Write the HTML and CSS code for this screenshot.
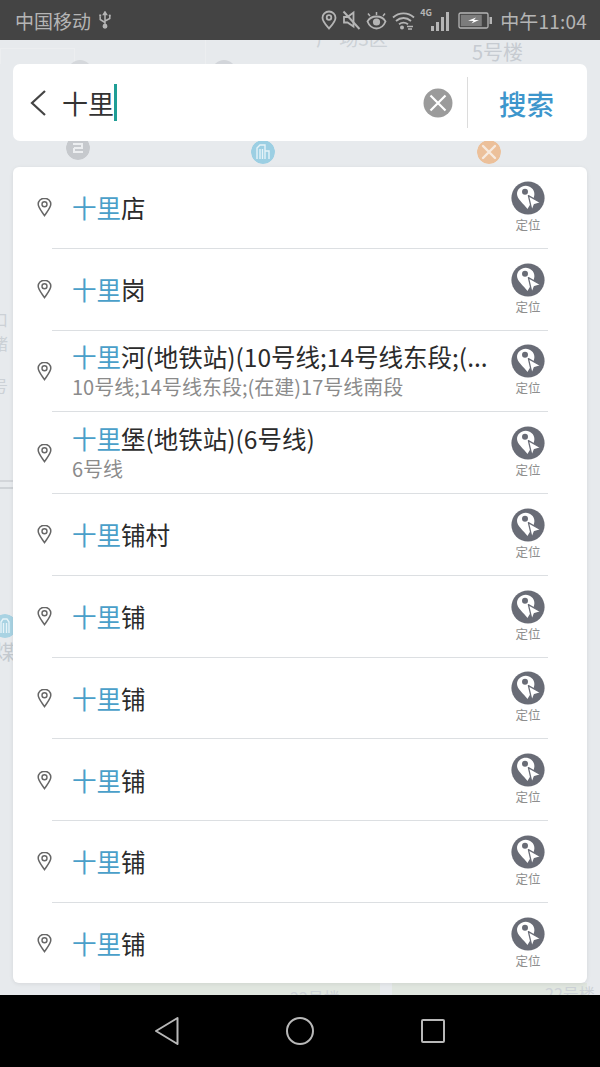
FILE: index.html
```html
<!DOCTYPE html>
<html lang="zh-CN">
<head>
    <meta charset="UTF-8">
    <meta name="viewport" content="width=device-width, initial-scale=1.0">
    <title>搜索</title>
    <link rel="stylesheet" href="styles.css">
</head>
<body>
    <svg class="sprites" width="0" height="0">
        <symbol id="pin" viewBox="0 0 15 20">
            <path d="M7.500 1.200C3.800 1.200 1.200 3.900 1.200 7.100 1.200 10.800 5.200 15 7.500 18.600 9.800 15 13.800 10.800 13.800 7.100 13.800 3.900 11.200 1.200 7.500 1.200Z" fill="none" stroke="#666" stroke-width="1.500"/>
            <circle cx="7.500" cy="7.200" r="2.500" fill="none" stroke="#666" stroke-width="1.400"/>
        </symbol>
        <symbol id="locate" viewBox="0 0 34 34">
            <circle cx="17" cy="17" r="16.600" fill="#696c76"/>
            <path d="M14.700 4.800C10 4.800 6 8.400 6 13 6 18 12.500 22.500 16.500 28 18.500 24 23.400 18.500 23.400 13 23.400 8.400 19.400 4.800 14.700 4.800Z" fill="#fff"/>
            <circle cx="14" cy="10.800" r="3" fill="#696c76"/>
            <path d="M17.400 14.600 29.800 21.800 23.400 23.600 21 29.800Z" fill="#fff" stroke="#696c76" stroke-width="1.300" stroke-linejoin="round"/>
        </symbol>
    </svg>

    <div class="screen">
        <div class="status-bar">
            <div class="status-left">
                <span>中国移动</span>
                <svg width="14" height="18" viewBox="0 0 14 18" fill="none" stroke="#b5b5b5" stroke-width="1.500">
                    <path d="M7 1.500V15M7 11.500 2.200 8.500V5.500M7 10 11.800 7.500V5"/>
                    <circle cx="7" cy="15.200" r="1.700" fill="#b5b5b5"/>
                    <path d="M5.500 3.500 7 1l1.500 2.500Z" fill="#b5b5b5"/>
                    <rect x="1.200" y="3.500" width="2" height="2" fill="#b5b5b5" stroke="none"/>
                    <circle cx="11.800" cy="4.500" r="1.100" fill="#b5b5b5" stroke="none"/>
                </svg>
            </div>
            <div class="status-right">
                <svg width="16" height="20" viewBox="0 0 16 20" fill="none" stroke="#b5b5b5" stroke-width="1.800">
                    <path d="M8 1.500C4.300 1.500 1.500 4.300 1.500 7.700 1.500 11.500 5.500 15.500 8 18.500 10.500 15.500 14.500 11.500 14.500 7.700 14.500 4.300 11.700 1.500 8 1.500Z"/>
                    <circle cx="8" cy="7.500" r="2.300"/>
                </svg>
                <svg width="19" height="20" viewBox="0 0 19 20" fill="none" stroke="#b5b5b5" stroke-width="1.800">
                    <path d="M2 7H5.500L11.500 2.500V16.500L5.500 12.500H2Z"/>
                    <path d="M1.500 1.500 17.500 19" stroke-width="2"/>
                </svg>
                <svg width="21" height="19" viewBox="0 0 21 19" fill="none" stroke="#b5b5b5" stroke-width="1.800">
                    <path d="M1.500 10.500C3.500 6.800 6.500 5.500 10.500 5.500S17.500 6.800 19.500 10.500C17.500 15.500 14.500 17.500 10.500 17.500S3.500 15.500 1.500 10.500Z"/>
                    <circle cx="10.500" cy="11" r="3.600" fill="#b5b5b5" stroke="none"/>
                    <path d="M4 5 2 2.500M10.500 4V1M17 5 19 2.500" stroke-width="1.500"/>
                </svg>
                <svg width="23" height="19" viewBox="0 0 23 19" fill="none" stroke="#b5b5b5" stroke-width="1.800">
                    <path d="M1 6.500C7 1 16 1 22 6.500M4 10C8.500 6 14.500 6 19 10M7 13.200C10 11 13 11 16 13.200"/>
                    <circle cx="10" cy="16.500" r="2" fill="#b5b5b5" stroke="none"/>
                    <path d="M15 15.500H21M16 18H20" stroke-width="1.400"/>
                </svg>
                <div class="signal">
                    <span class="net">4G</span>
                    <span class="bar bar-1"></span>
                    <span class="bar bar-2"></span>
                    <span class="bar bar-3"></span>
                    <span class="bar bar-4"></span>
                </div>
                <svg class="battery" width="35" height="17" viewBox="0 0 35 17">
                    <rect x="1" y="1" width="29" height="15" rx="1.500" fill="none" stroke="#b5b5b5" stroke-width="1.300"/>
                    <rect x="2.800" y="2.800" width="21" height="11.400" fill="#7c7c7c"/>
                    <rect x="31.500" y="5" width="2.500" height="7" fill="#b5b5b5"/>
                    <path d="M10 8.800 18 5.500 16 8 21 8 13.500 11.500 15.500 9Z" fill="#fff"/>
                </svg>
                <span class="clock">中午11:04</span>
            </div>
        </div>

        <div class="map">
            <!-- faded map behind the cards -->
            <div class="block block-a"></div>
            <div class="block block-b"></div>
            <div class="block block-c"></div>
            <div class="block block-d"></div>
            <div class="block block-e"></div>
            <div class="block block-f"></div>
            <span class="map-label label-area">广 场3区</span>
            <span class="map-label label-bldg">5号楼</span>
            <span class="map-label label-l1">口</span>
            <span class="map-label label-l2">诸</span>
            <span class="map-label label-l3">号</span>
            <span class="map-label label-l4">煤</span>
            <span class="map-label label-b1">22号楼</span>
            <span class="map-label label-b2">22号楼</span>
            <span class="poi poi-top-a"></span>
            <span class="poi poi-top-b"></span>
            <svg class="poi poi-gray" viewBox="0 0 24 24">
                <circle cx="12" cy="12" r="12" fill="#c6c9cd"/>
                <path d="M7 8H16V12H8M8 12V16H17" fill="none" stroke="#eceef0" stroke-width="2"/>
            </svg>
            <svg class="poi poi-blue" viewBox="0 0 24 24">
                <circle cx="12" cy="12" r="12" fill="#9ccfe3"/>
                <path d="M6 19V8L9 5H14V19M14 11H18V19M9 9V19M11.500 9V19" fill="none" stroke="#e6f3f8" stroke-width="1.400"/>
            </svg>
            <svg class="poi poi-orange" viewBox="0 0 24 24">
                <circle cx="12" cy="12" r="12" fill="#ecc09a"/>
                <path d="M6 6 18 18M18 6 6 18" stroke="#f7eadf" stroke-width="2.400" stroke-linecap="round"/>
            </svg>
            <svg class="poi poi-side" viewBox="0 0 24 24">
                <circle cx="12" cy="12" r="12" fill="#a9d3e3"/>
                <path d="M8 19V8L10 5H14L16 8V19M10.500 9V19M13.500 9V19" fill="none" stroke="#e6f3f8" stroke-width="1.400"/>
            </svg>

            <div class="search-card">
                <svg class="back" width="18" height="28" viewBox="0 0 18 28" fill="none" stroke="#444" stroke-width="2.200">
                    <path d="M16 2 3 14 16 26"/>
                </svg>
                <div class="query"><span>十里</span><i class="caret"></i></div>
                <svg class="clear" width="30" height="30" viewBox="0 0 30 30">
                    <circle cx="15" cy="15" r="14.500" fill="#9b9b9b"/>
                    <path d="M7.500 7.500 22.500 22.500M22.500 7.500 7.500 22.500" stroke="#fff" stroke-width="2.200"/>
                </svg>
                <div class="search-sep"></div>
                <div class="search-btn">搜索</div>
            </div>

            <div class="result-card">
                <div class="row">
                    <svg class="row-pin"><use href="#pin"/></svg>
                    <div class="row-text"><div class="title"><em>十里</em>店</div></div>
                    <div class="locate"><svg><use href="#locate"/></svg><span>定位</span></div>
                </div>
                <div class="sep"></div>
                <div class="row">
                    <svg class="row-pin"><use href="#pin"/></svg>
                    <div class="row-text"><div class="title"><em>十里</em>岗</div></div>
                    <div class="locate"><svg><use href="#locate"/></svg><span>定位</span></div>
                </div>
                <div class="sep"></div>
                <div class="row">
                    <svg class="row-pin"><use href="#pin"/></svg>
                    <div class="row-text">
                        <div class="title"><em>十里</em>河(地铁站)(10号线;14号线东段;(...</div>
                        <div class="sub">10号线;14号线东段;(在建)17号线南段</div>
                    </div>
                    <div class="locate"><svg><use href="#locate"/></svg><span>定位</span></div>
                </div>
                <div class="sep"></div>
                <div class="row">
                    <svg class="row-pin"><use href="#pin"/></svg>
                    <div class="row-text">
                        <div class="title"><em>十里</em>堡(地铁站)(6号线)</div>
                        <div class="sub">6号线</div>
                    </div>
                    <div class="locate"><svg><use href="#locate"/></svg><span>定位</span></div>
                </div>
                <div class="sep"></div>
                <div class="row">
                    <svg class="row-pin"><use href="#pin"/></svg>
                    <div class="row-text"><div class="title"><em>十里</em>铺村</div></div>
                    <div class="locate"><svg><use href="#locate"/></svg><span>定位</span></div>
                </div>
                <div class="sep"></div>
                <div class="row">
                    <svg class="row-pin"><use href="#pin"/></svg>
                    <div class="row-text"><div class="title"><em>十里</em>铺</div></div>
                    <div class="locate"><svg><use href="#locate"/></svg><span>定位</span></div>
                </div>
                <div class="sep"></div>
                <div class="row">
                    <svg class="row-pin"><use href="#pin"/></svg>
                    <div class="row-text"><div class="title"><em>十里</em>铺</div></div>
                    <div class="locate"><svg><use href="#locate"/></svg><span>定位</span></div>
                </div>
                <div class="sep"></div>
                <div class="row">
                    <svg class="row-pin"><use href="#pin"/></svg>
                    <div class="row-text"><div class="title"><em>十里</em>铺</div></div>
                    <div class="locate"><svg><use href="#locate"/></svg><span>定位</span></div>
                </div>
                <div class="sep"></div>
                <div class="row">
                    <svg class="row-pin"><use href="#pin"/></svg>
                    <div class="row-text"><div class="title"><em>十里</em>铺</div></div>
                    <div class="locate"><svg><use href="#locate"/></svg><span>定位</span></div>
                </div>
                <div class="sep"></div>
                <div class="row">
                    <svg class="row-pin"><use href="#pin"/></svg>
                    <div class="row-text"><div class="title"><em>十里</em>铺</div></div>
                    <div class="locate"><svg><use href="#locate"/></svg><span>定位</span></div>
                </div>
            </div>
        </div>

        <div class="nav-bar">
            <svg width="26" height="30" viewBox="0 0 26 30" fill="none" stroke="#b8b8b8" stroke-width="2" stroke-linejoin="round">
                <path d="M23.500 2 2 15 23.500 28Z"/>
            </svg>
            <svg width="30" height="30" viewBox="0 0 30 30" fill="none" stroke="#b8b8b8" stroke-width="2">
                <circle cx="15" cy="15" r="13"/>
            </svg>
            <svg width="26" height="26" viewBox="0 0 26 26" fill="none" stroke="#b8b8b8" stroke-width="2" stroke-linejoin="round">
                <rect x="2" y="2" width="22" height="22" rx="1"/>
            </svg>
        </div>
    </div>
</body>
</html>
```

FILE: styles.css
```css
* {
    box-sizing: border-box;
}
body {
    margin: 0;
    font-family: "Noto Sans CJK SC", "Noto Sans", sans-serif;
    background-color: #000;
}
.sprites {
    position: absolute;
}
.screen {
    width: 600px;
    height: 1067px;
    display: flex;
    flex-direction: column;
    overflow: hidden;
}

/* status bar */
.status-bar {
    height: 40px;
    flex-shrink: 0;
    background-color: #444;
    color: #b5b5b5;
    display: flex;
    justify-content: space-between;
    align-items: center;
    padding: 0 13px 0 15px;
    font-size: 19px;
}
.status-left {
    display: flex;
    align-items: center;
    gap: 7px;
}
.status-right {
    display: flex;
    align-items: center;
    gap: 5px;
}
.signal {
    position: relative;
    width: 29px;
    height: 22px;
    display: flex;
    align-items: flex-end;
    justify-content: flex-end;
    gap: 2px;
}
.net {
    position: absolute;
    left: 0;
    top: -2px;
    font-size: 9px;
    font-weight: 700;
    line-height: 12px;
}
.bar {
    width: 3px;
    background-color: #b5b5b5;
}
.bar-1 { height: 5px; }
.bar-2 { height: 9px; }
.bar-3 { height: 14px; }
.bar-4 { height: 19px; }
.battery {
    margin-left: 4px;
}
.clock {
    margin-left: 2px;
    letter-spacing: 0.2px;
}

/* map background */
.map {
    position: relative;
    flex: 1;
    background-color: #e7eaed;
    padding: 24px 13px 12px;
    display: flex;
    flex-direction: column;
    gap: 26px;
    overflow: hidden;
}
.block {
    position: absolute;
}
.block-a { left: 0; top: 8px; width: 75px; height: 16px; border: 1px solid #eceef0; border-bottom: none; }
.block-b { left: 205px; top: 0; width: 90px; height: 24px; border-left: 1px solid #eceef0; }
.block-c { left: 100px; bottom: 0; width: 280px; height: 12px; background-color: #e0e6df; }
.block-d { left: 392px; bottom: 0; width: 195px; height: 12px; background-color: #e0e6df; }
.block-e { left: 0; top: 440px; width: 13px; height: 2px; background-color: #d3d6da; }
.block-f { left: 0; top: 447px; width: 13px; height: 2px; background-color: #cfd3d7; }
.map-label {
    position: absolute;
    font-size: 18px;
    line-height: 22px;
    color: #ccd1d6;
}
.label-area { left: 316px; top: -13px; font-size: 19px; }
.label-bldg { left: 472px; top: 1px; font-size: 20px; color: #c6cbd1; }
.label-l1 { left: -8px; top: 268px; font-size: 16px; }
.label-l2 { left: -8px; top: 292px; font-size: 16px; }
.label-l3 { left: -8px; top: 334px; font-size: 16px; }
.label-l4 { left: -5px; top: 601px; font-size: 20px; color: #c3c9cf; }
.label-b1 { left: 290px; bottom: -13px; font-size: 16px; }
.label-b2 { left: 545px; bottom: -9px; font-size: 16px; }
.poi {
    position: absolute;
    width: 24px;
    height: 24px;
    border-radius: 50%;
}
.poi-top-a { left: 68px; top: 20px; background-color: #d5d8dc; }
.poi-top-b { left: 212px; top: 20px; background-color: #d2d5da; }
.poi-gray { left: 66px; top: 96px; }
.poi-blue { left: 251px; top: 100px; }
.poi-orange { left: 477px; top: 100px; }
.poi-side { left: -7px; top: 574px; }

/* search box */
.search-card {
    position: relative;
    height: 77px;
    flex-shrink: 0;
    background-color: #fff;
    border-radius: 7px;
    display: flex;
    align-items: center;
    padding: 0 0 0 16px;
}
.back {
    flex-shrink: 0;
    margin-right: 15px;
}
.query {
    flex: 1;
    display: flex;
    align-items: center;
    font-size: 26px;
    line-height: 38px;
    color: #333;
}
.caret {
    width: 3px;
    height: 37px;
    background-color: #1f9e96;
}
.clear {
    flex-shrink: 0;
    margin-right: 14px;
}
.search-sep {
    width: 1px;
    height: 51px;
    background-color: #dcdcdc;
}
.search-btn {
    width: 119px;
    padding-right: 2px;
    text-align: center;
    font-size: 27.500px;
    font-weight: 500;
    color: #3d96cc;
}

/* results */
.result-card {
    position: relative;
    height: 816px;
    flex-shrink: 0;
    background-color: #fff;
    border-radius: 6px;
    box-shadow: 0 1px 4px rgba(0,0,0,0.08);
}
.row {
    height: 80.75px;
    display: flex;
    align-items: center;
    padding-left: 24px;
}
.sep {
    height: 1px;
    margin: 0 39px;
    background-color: #dcdfe2;
}
.row-pin {
    width: 15px;
    height: 20px;
    flex-shrink: 0;
    margin-right: 20px;
}
.row-text {
    width: 429px;
    padding-top: 2px;
}
.title {
    font-size: 24.500px;
    line-height: 30px;
    color: #2b2b2b;
    white-space: nowrap;
}
.title em {
    font-style: normal;
    color: #4a9fc9;
}
.sub {
    font-size: 20px;
    line-height: 30px;
    color: #8b8b8b;
    white-space: nowrap;
}
.locate {
    width: 50px;
    margin-left: 2px;
    display: flex;
    flex-direction: column;
    align-items: center;
    padding-top: 1px;
}
.locate svg {
    width: 34px;
    height: 34px;
}
.locate span {
    font-size: 12.500px;
    line-height: 20px;
    color: #8e8e8e;
}

/* bottom nav */
.nav-bar {
    height: 72px;
    flex-shrink: 0;
    background-color: #000;
    display: flex;
    justify-content: center;
    align-items: center;
    gap: 105px;
}
```
